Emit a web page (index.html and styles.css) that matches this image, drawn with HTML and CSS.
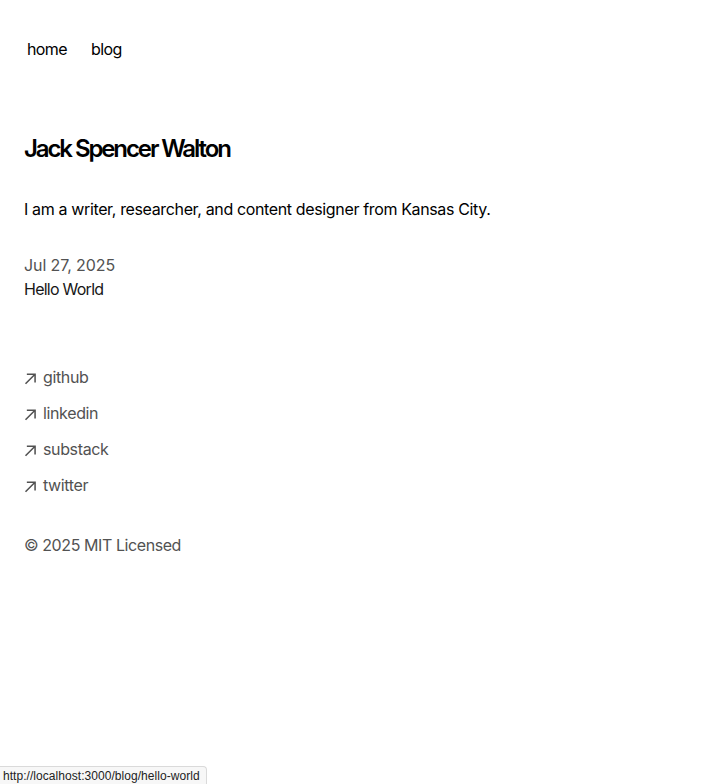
FILE: index.html
```html
<!DOCTYPE html>
<html lang="en">
<head>
<meta charset="utf-8">
<title>Jack Spencer Walton</title>
<link rel="stylesheet" href="styles.css">
</head>
<body>
<main class="main">
  <nav class="nav">
    <a class="nav-link" href="/">home</a>
    <a class="nav-link" href="/blog">blog</a>
  </nav>
  <section>
    <h1 class="title">Jack Spencer Walton</h1>
    <p class="intro">I am a writer, researcher, and content designer from Kansas City.</p>
    <div class="posts">
      <a class="post" href="/blog/hello-world">
        <p class="post-date">Jul 27, 2025</p>
        <p class="post-title">Hello World</p>
      </a>
    </div>
  </section>
  <footer class="footer">
    <ul class="links">
      <li><a class="ext" href="#"><svg class="arrow" width="12" height="12" viewBox="0 0 12 12" fill="none"><path d="M2.07102 11.3494L0.963068 10.2415L9.2017 1.98864H2.83807L2.85227 0.454545H11.8438V9.46023H10.2955L10.3097 3.09659L2.07102 11.3494Z" fill="currentColor"/></svg><span class="ext-label">github</span></a></li>
      <li><a class="ext" href="#"><svg class="arrow" width="12" height="12" viewBox="0 0 12 12" fill="none"><path d="M2.07102 11.3494L0.963068 10.2415L9.2017 1.98864H2.83807L2.85227 0.454545H11.8438V9.46023H10.2955L10.3097 3.09659L2.07102 11.3494Z" fill="currentColor"/></svg><span class="ext-label">linkedin</span></a></li>
      <li><a class="ext" href="#"><svg class="arrow" width="12" height="12" viewBox="0 0 12 12" fill="none"><path d="M2.07102 11.3494L0.963068 10.2415L9.2017 1.98864H2.83807L2.85227 0.454545H11.8438V9.46023H10.2955L10.3097 3.09659L2.07102 11.3494Z" fill="currentColor"/></svg><span class="ext-label">substack</span></a></li>
      <li><a class="ext" href="#"><svg class="arrow" width="12" height="12" viewBox="0 0 12 12" fill="none"><path d="M2.07102 11.3494L0.963068 10.2415L9.2017 1.98864H2.83807L2.85227 0.454545H11.8438V9.46023H10.2955L10.3097 3.09659L2.07102 11.3494Z" fill="currentColor"/></svg><span class="ext-label">twitter</span></a></li>
    </ul>
    <p class="copyright">© 2025 MIT Licensed</p>
  </footer>
</main>
<div class="status">http://localhost:3000/blog/hello-world</div>
</body>
</html>
```

FILE: styles.css
```css
* { box-sizing: border-box; }
html, body { margin: 0; padding: 0; }
body {
  background: #fff;
  color: #000;
  font-family: Inter, "Liberation Sans", sans-serif;
  font-size: 16px;
  line-height: 24px;
  letter-spacing: -0.36px;
  -webkit-font-smoothing: antialiased;
}
a { color: inherit; text-decoration: none; }
p { margin: 0; }
.main {
  max-width: 576px;
  margin: 0 16px;
  padding: 29px 8px 0;
  display: flex;
  flex-direction: column;
}
.nav {
  display: flex;
  margin-left: -9px;
  margin-bottom: 64px;
  letter-spacing: -0.6px;
}
.nav-link {
  display: flex;
  padding: 4px 8px;
  margin: 4px;
}
.title {
  margin: 0 0 32px;
  font-size: 24px;
  line-height: 32px;
  font-weight: 600;
  letter-spacing: -2.1px;
}
.intro { margin-bottom: 16px; }
.posts { margin: 32px 0; }
.post {
  display: flex;
  flex-direction: column;
  margin-bottom: 16px;
}
.post-date {
  color: #525252;
  letter-spacing: -0.1px;
}
.post-title {
  color: #171717;
  letter-spacing: -0.75px;
}
.footer { margin-bottom: 64px; }
.links {
  list-style: none;
  margin: 32px 0 0;
  padding: 0;
  display: flex;
  flex-direction: column;
  gap: 8px;
  color: #525252;
}
.ext {
  display: flex;
  align-items: center;
}
.arrow { flex: none; }
.ext-label {
  margin-left: 7px;
  height: 28px;
}
.copyright {
  margin-top: 32px;
  color: #525252;
  letter-spacing: -0.42px;
}
.status {
  position: fixed;
  left: 0;
  bottom: 0;
  height: 18px;
  padding: 0 6px 0 3px;
  background: #f7f7f7;
  border: 1px solid #dadada;
  border-left: none;
  border-bottom: none;
  border-top-right-radius: 4px;
  font-family: "Liberation Sans", Arial, sans-serif;
  font-size: 12px;
  line-height: 18px;
  letter-spacing: 0.05px;
  color: #222;
  white-space: nowrap;
}
```
